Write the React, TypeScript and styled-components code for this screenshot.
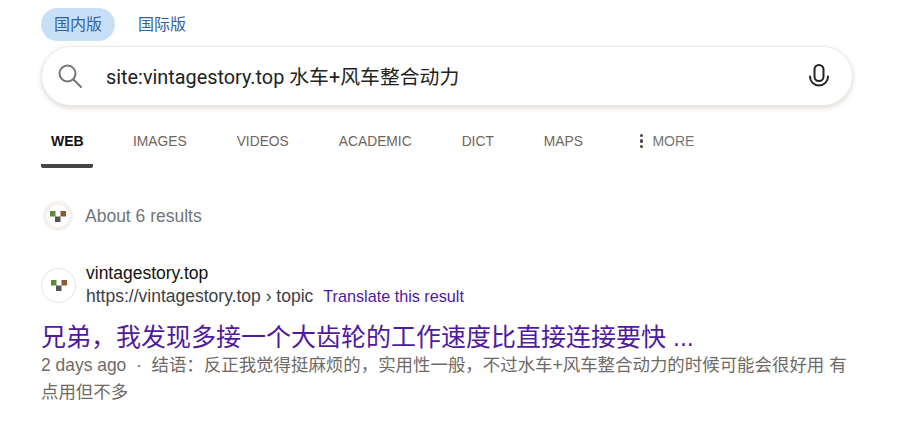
import styled, { createGlobalStyle } from 'styled-components'

const FONT = `"Roboto", "Liberation Sans", "Noto Sans CJK SC", sans-serif`
const ARIAL = `"Liberation Sans", "Noto Sans CJK SC", sans-serif`

const navItems = ['IMAGES', 'VIDEOS', 'ACADEMIC', 'DICT', 'MAPS']

function SiteIcon() {
  return (
    <svg width="16" height="11" viewBox="0 0 16 11">
      <rect x="0" y="0" width="5.5" height="5.5" fill="#5d8a3a" />
      <rect x="10.5" y="0" width="5.5" height="5.5" fill="#8a5a34" />
      <rect x="5" y="5.5" width="5.5" height="5.5" fill="#555" />
    </svg>
  )
}

function SearchIcon() {
  return (
    <svg width="26" height="26" viewBox="0 0 26 26" fill="none" stroke="#70757a" strokeWidth="2">
      <circle cx="10.5" cy="10.5" r="8" />
      <path d="M16.5 16.5 24 24" strokeLinecap="round" />
    </svg>
  )
}

function MicIcon() {
  return (
    <svg width="22" height="24" viewBox="0 0 22 24" fill="none" stroke="#222" strokeWidth="2">
      <rect x="6.5" y="1" width="9" height="16" rx="4.5" />
      <path d="M2 12.5c0 5 4 9 9 9s9-4 9-9" strokeLinecap="round" />
    </svg>
  )
}

export default function App() {
  return (
    <Page>
      <GlobalStyle />
      <Regions>
        <Region $active>国内版</Region>
        <Region>国际版</Region>
      </Regions>
      <SearchBox>
        <SearchIcon />
        <Query>site:vintagestory.top 水车+风车整合动力</Query>
        <MicIcon />
      </SearchBox>
      <Nav>
        <NavActive>WEB</NavActive>
        {navItems.map((item) => (
          <NavItem key={item}>{item}</NavItem>
        ))}
        <More>
          <Dots>
            <i />
            <i />
            <i />
          </Dots>
          MORE
        </More>
      </Nav>
      <Summary>
        <SummaryBadge>
          <SiteIcon />
        </SummaryBadge>
        About 6 results
      </Summary>
      <Result>
        <ResultHead>
          <ResultBadge>
            <SiteIcon />
          </ResultBadge>
          <div>
            <SiteName>vintagestory.top</SiteName>
            <SiteUrl>
              https://vintagestory.top › topic<Translate>Translate this result</Translate>
            </SiteUrl>
          </div>
        </ResultHead>
        <Title>兄弟，我发现多接一个大齿轮的工作速度比直接连接要快 ...</Title>
        <Snippet>
          2 days ago &nbsp;·&nbsp; 结语：反正我觉得挺麻烦的，实用性一般，不过水车+风车整合动力的时候可能会很好用 有点用但不多
        </Snippet>
      </Result>
    </Page>
  )
}

const GlobalStyle = createGlobalStyle`
  html, body {
    margin: 0;
    background: #fff;
  }
`

const Page = styled.div`
  width: 919px;
  height: 427px;
  box-sizing: border-box;
  padding: 8px 66px 0 41px;
  overflow: hidden;
  font-family: ${ARIAL};
`

const Regions = styled.div`
  display: flex;
  height: 33px;
`

const Region = styled.div<{ $active?: boolean }>`
  width: 74px;
  margin-right: 10px;
  border-radius: 17px;
  text-align: center;
  font: 16px/33px ${FONT};
  color: #35609e;
  background: ${({ $active }) => ($active ? '#c8e0f6' : 'transparent')};
`

const SearchBox = styled.div`
  display: flex;
  align-items: center;
  height: 60px;
  box-sizing: border-box;
  margin-top: 5px;
  padding: 0 22px 0 15px;
  border: 1px solid #eeeae6;
  border-radius: 30px;
  background: #fff;
  box-shadow: 0 2px 5px rgba(110, 90, 70, 0.22);
`

const Query = styled.div`
  flex: 1;
  margin: 0 0 2px 23px;
  font: 19.85px ${FONT};
  color: #222;
`

const Nav = styled.nav`
  display: flex;
  height: 62px;
  font: 13.8px/70px ${ARIAL};
  color: #70655d;
`

const NavItem = styled.div`
  margin-right: 50px;
  line-height: 72px;
`

const NavActive = styled.div`
  width: 52px;
  margin-right: 40px;
  height: 62px;
  box-sizing: border-box;
  border-bottom: 4px solid #444;
  border-radius: 0 0 2px 2px;
  padding-left: 10px;
  font-size: 14px;
  font-weight: 700;
  color: #111;
`

const More = styled.div`
  display: flex;
  align-items: center;
  height: 70px;
  margin-left: 7px;
  font-size: 14px;
  color: #70757a;
`

const Dots = styled.span`
  display: flex;
  flex-direction: column;
  gap: 2px;
  margin-right: 9px;

  i {
    width: 3.5px;
    height: 3.5px;
    border-radius: 50%;
    background: #444;
  }
`

const Summary = styled.div`
  display: flex;
  align-items: center;
  height: 30px;
  margin-top: 33px;
  padding-left: 2px;
  font: 17.5px ${ARIAL};
  color: #70757a;
`

const SummaryBadge = styled.span`
  display: flex;
  align-items: center;
  justify-content: center;
  width: 30px;
  height: 30px;
  box-sizing: border-box;
  margin-right: 12px;
  border: 4px solid #f4f1ee;
  border-radius: 50%;
`

const Result = styled.section`
  margin-top: 31px;
`

const ResultHead = styled.div`
  display: flex;
  align-items: center;
`

const ResultBadge = styled.span`
  display: flex;
  align-items: center;
  justify-content: center;
  width: 35px;
  height: 35px;
  box-sizing: border-box;
  margin-right: 10px;
  border: 1px solid #e4e4e4;
  border-radius: 50%;
`

const SiteName = styled.div`
  font-size: 17.5px;
  line-height: 23px;
  color: #111;
`

const SiteUrl = styled.div`
  font-size: 17.5px;
  line-height: 23px;
  color: #3c4043;
`

const Translate = styled.span`
  margin-left: 10px;
  font-size: 16.2px;
  color: #4f1a9f;
`

const Title = styled.h3`
  margin: 12px 0 0;
  font-weight: 400;
  font-size: 25px;
  line-height: 34px;
  color: #4f1a9f;
`

const Snippet = styled.p`
  margin: -2px 0 0;
  width: 812px;
  font-size: 17.45px;
  line-height: 27px;
  color: #6f6a66;
`
